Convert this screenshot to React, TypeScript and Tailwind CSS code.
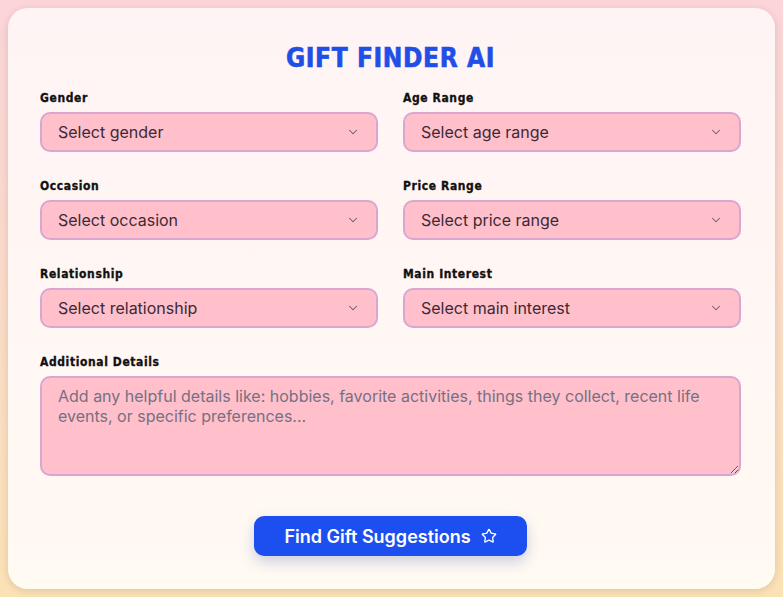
import { ChevronDown, Star } from "lucide-react";

const fields = [
  { label: "Gender", placeholder: "Select gender" },
  { label: "Age Range", placeholder: "Select age range" },
  { label: "Occasion", placeholder: "Select occasion" },
  { label: "Price Range", placeholder: "Select price range" },
  { label: "Relationship", placeholder: "Select relationship" },
  { label: "Main Interest", placeholder: "Select main interest" },
];

const labelFont = { fontFamily: '"DejaVu Sans Condensed", "DejaVu Sans", sans-serif' };

export default function App() {
  return (
    <div className="min-h-[597px] bg-gradient-to-b from-[#fbd5d9] to-[#fbe2b6] p-2 font-['Inter',sans-serif]">
      <div className="rounded-[20px] bg-gradient-to-b from-[#fff4f5] to-[#fffaf2] pt-8 pr-[34px] pb-[33px] pl-8 shadow-[0_2px_8px_rgba(0,0,0,0.12)]">
        <h1
          className="text-center text-[26px] font-bold leading-9 tracking-[0.6px] text-[#1f4fe6] [-webkit-text-stroke:0.6px_#1f4fe6]"
          style={labelFont}
        >
          GIFT FINDER AI
        </h1>

        {/* selects */}
        <div className="mt-[14px] grid grid-cols-2 gap-x-[25px] gap-y-[26px]">
          {fields.map((f) => (
            <div key={f.label}>
              <div
                className="mb-1.5 text-[12px] font-bold leading-4 tracking-[0.6px] text-[#111] [-webkit-text-stroke:0.3px_#111]"
                style={labelFont}
              >
                {f.label}
              </div>
              <div className="flex h-10 items-center justify-between rounded-[10px] border-2 border-[#d9a6cf] bg-[#ffc0cb] pr-[16px] pl-4">
                <span className="text-[16px] text-[#3a2a36]">{f.placeholder}</span>
                <ChevronDown className="h-3.5 w-3.5 text-[#6b5a66]" strokeWidth={1.75} />
              </div>
            </div>
          ))}
        </div>

        {/* details */}
        <div className="mt-[26px]">
          <div
            className="mb-1.5 text-[12px] font-bold leading-4 tracking-[0.6px] text-[#111] [-webkit-text-stroke:0.3px_#111]"
            style={labelFont}
          >
            Additional Details
          </div>
          <textarea
            className="block h-[100px] w-full resize-y rounded-[10px] border-2 border-[#d9a6cf] bg-[#ffc0cb] px-4 py-2 text-[16px] leading-5 text-[#3a2a36] outline-none placeholder:text-[#757082]"
            placeholder="Add any helpful details like: hobbies, favorite activities, things they collect, recent life events, or specific preferences..."
          />
        </div>

        <div className="mt-10 flex justify-center">
          <button className="flex h-10 w-[273px] items-center justify-center gap-2.5 rounded-[10px] bg-[#1d4ff0] text-[18px] font-semibold text-white shadow-[0_6px_14px_rgba(30,60,160,0.22)]">
            Find Gift Suggestions
            <Star className="h-4 w-4" strokeWidth={2} />
          </button>
        </div>
      </div>
    </div>
  );
}
